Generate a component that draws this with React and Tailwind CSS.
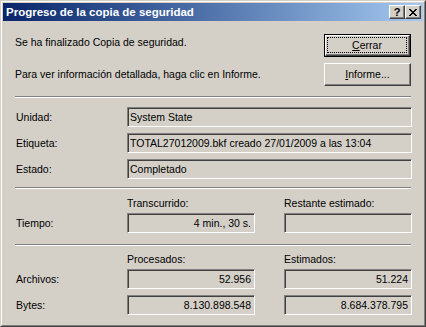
import React from 'react';

// Classic Windows 2000 style "backup progress" dialog

const Sep = ({ className = '' }) => (
  <div className={`h-[2px] border-t border-t-[#808080] border-b border-b-white ${className}`} />
);

const Field = ({ children, right }) => (
  <div
    className={`h-[20px] flex items-center whitespace-nowrap overflow-hidden border border-t-[#808080] border-l-[#808080] border-b-white border-r-white shadow-[inset_1px_1px_0_#404040] ${
      right ? 'justify-end pr-[3px]' : 'pl-[2px]'
    }`}
  >
    {children}
  </div>
);

const Raised = ({ children }) => (
  <div className="h-full border border-t-white border-l-white border-b-[#404040] border-r-[#404040] shadow-[inset_-1px_-1px_0_#808080]">
    {children}
  </div>
);

const Btn = ({ children, def }) =>
  def ? (
    <div className="h-[23px] w-[87px] border border-black">
      <Raised>
        <div className="h-full p-[1px] pr-[2px] pb-[2px]">
          <div className="h-full border border-dotted border-black flex items-center justify-center">{children}</div>
        </div>
      </Raised>
    </div>
  ) : (
    <div className="h-[23px] w-[87px]">
      <Raised>
        <div className="h-full flex items-center justify-center">{children}</div>
      </Raised>
    </div>
  );

const CapBtn = ({ children }) => (
  <div className="w-[16px] h-[14px] bg-[#D4D0C8] border border-t-white border-l-white border-b-[#404040] border-r-[#404040] shadow-[inset_-1px_-1px_0_#808080] flex items-center justify-center">
    {children}
  </div>
);

const CloseGlyph = () => (
  <svg width="8" height="7" viewBox="0 0 8 7" shapeRendering="crispEdges">
    <path
      d="M0 0h2v1H0zM6 0h2v1H6zM1 1h2v1H1zM5 1h2v1H5zM2 2h4v1H2zM3 3h2v1H3zM2 4h4v1H2zM1 5h2v1H1zM5 5h2v1H5zM0 6h2v1H0zM6 6h2v1H6z"
      fill="#000"
    />
  </svg>
);

const Label = ({ children }) => <div className="w-[112px] shrink-0 pl-[1px]">{children}</div>;

export default function App() {
  return (
    <div className="w-[426px] h-[327px] bg-[#D4D0C8] text-black text-[10.5px] leading-[13px] font-['Liberation_Sans',Arial,sans-serif] border border-t-[#D4D0C8] border-l-[#D4D0C8] border-b-[#404040] border-r-[#404040]">
      <div className="h-full border border-t-white border-l-white border-b-[#808080] border-r-[#808080] p-[1px] flex flex-col">
        {/* title bar */}
        <div className="h-[18px] shrink-0 flex items-center justify-between pl-[3px] pr-[2px] bg-linear-to-r from-[#0A246A] to-[#A6CAF0]">
          <span className="text-white font-bold text-[11.5px]">Progreso de la copia de seguridad</span>
          <div className="flex">
            <CapBtn>
              <span className="font-bold text-[11px] leading-none">?</span>
            </CapBtn>
            <CapBtn>
              <CloseGlyph />
            </CapBtn>
          </div>
        </div>

        {/* body */}
        <div className="flex-1 pl-[12px] pr-[11px] flex flex-col">
          <div className="mt-[13px] flex justify-between">
            <div className="pt-[2px]">
              <div>Se ha finalizado Copia de seguridad.</div>
              <div className="mt-[19px]">Para ver información detallada, haga clic en Informe.</div>
            </div>
            <div className="flex flex-col gap-[6px] mr-[1px]">
              <Btn def>
                <span>
                  <span className="underline">C</span>errar
                </span>
              </Btn>
              <Btn>
                <span>
                  <span className="underline">I</span>nforme...
                </span>
              </Btn>
            </div>
          </div>

          <Sep className="mt-[10px] mr-[1px]" />

          <div className="mt-[9px] flex flex-col gap-[6px]">
            <div className="flex items-center">
              <Label>Unidad:</Label>
              <div className="flex-1">
                <Field>System State</Field>
              </div>
            </div>
            <div className="flex items-center">
              <Label>Etiqueta:</Label>
              <div className="flex-1">
                <Field>TOTAL27012009.bkf creado 27/01/2009 a las 13:04</Field>
              </div>
            </div>
            <div className="flex items-center">
              <Label>Estado:</Label>
              <div className="flex-1">
                <Field>Completado</Field>
              </div>
            </div>
          </div>

          <Sep className="mt-[8px] mr-[1px]" />

          <div className="mt-[8px] flex">
            <Label />
            <div className="w-[128px]">Transcurrido:</div>
            <div className="ml-[29px] w-[128px]">Restante estimado:</div>
          </div>
          <div className="mt-[3px] flex items-center">
            <Label>Tiempo:</Label>
            <div className="w-[128px]">
              <Field right>4 min., 30 s.</Field>
            </div>
            <div className="ml-[29px] w-[128px]">
              <Field right />
            </div>
          </div>

          <Sep className="mt-[11px] mr-[1px]" />

          <div className="mt-[7px] flex">
            <Label />
            <div className="w-[128px]">Procesados:</div>
            <div className="ml-[29px] w-[128px]">Estimados:</div>
          </div>
          <div className="mt-[3px] flex items-center">
            <Label>Archivos:</Label>
            <div className="w-[128px]">
              <Field right>52.956</Field>
            </div>
            <div className="ml-[29px] w-[128px]">
              <Field right>51.224</Field>
            </div>
          </div>
          <div className="mt-[6px] flex items-center">
            <Label>Bytes:</Label>
            <div className="w-[128px]">
              <Field right>8.130.898.548</Field>
            </div>
            <div className="ml-[29px] w-[128px]">
              <Field right>8.684.378.795</Field>
            </div>
          </div>
        </div>
      </div>
    </div>
  );
}
